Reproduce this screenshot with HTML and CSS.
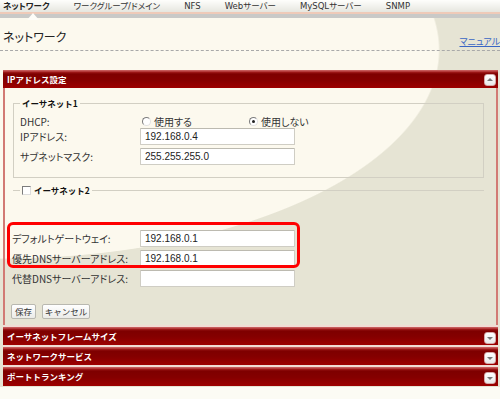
FILE: index.html
```html
<!DOCTYPE html>
<html lang="ja">
<head>
    <meta charset="UTF-8">
    <title>ネットワーク</title>
    <link rel="stylesheet" href="styles.css">
</head>
<body>
    <div class="nav">
        <a class="tab active">ネットワーク</a>
        <a class="tab">ワークグループ/ドメイン</a>
        <a class="tab">NFS</a>
        <a class="tab">Webサーバー</a>
        <a class="tab">MySQLサーバー</a>
        <a class="tab">SNMP</a>
    </div>

    <div class="main">
        <div class="page-head">
            <h1>ネットワーク</h1>
            <a class="manual" href="#">マニュアル</a>
        </div>

        <div class="panel">
            <div class="panel-head">IPアドレス設定<span class="toggle up"></span></div>
            <div class="panel-body">
                <fieldset class="group">
                    <legend>イーサネット1</legend>
                    <div class="row dhcp">
                        <span class="label">DHCP:</span>
                        <label class="opt first"><span class="radio"></span>使用する</label>
                        <label class="opt"><span class="radio checked"></span>使用しない</label>
                    </div>
                    <div class="row">
                        <label class="label">IPアドレス:</label>
                        <input class="field" type="text" value="192.168.0.4">
                    </div>
                    <div class="row">
                        <label class="label">サブネットマスク:</label>
                        <input class="field" type="text" value="255.255.255.0">
                    </div>
                </fieldset>

                <fieldset class="group folded">
                    <legend><span class="check"></span>イーサネット2</legend>
                </fieldset>

                <div class="rows">
                    <div class="row">
                        <label class="label">デフォルトゲートウェイ:</label>
                        <input class="field" type="text" value="192.168.0.1">
                    </div>
                    <div class="row">
                        <label class="label">優先DNSサーバーアドレス:</label>
                        <input class="field" type="text" value="192.168.0.1">
                    </div>
                    <div class="row">
                        <label class="label">代替DNSサーバーアドレス:</label>
                        <input class="field" type="text" value="">
                    </div>
                </div>

                <div class="actions">
                    <button class="btn save">保存</button>
                    <button class="btn cancel">キャンセル</button>
                </div>

                <!-- 注目枠 -->
                <div class="highlight"></div>
            </div>
            <div class="panel-head closed">イーサネットフレームサイズ<span class="toggle"></span></div>
            <div class="panel-head closed">ネットワークサービス<span class="toggle"></span></div>
            <div class="panel-head closed">ポートトランキング<span class="toggle"></span></div>
        </div>
    </div>
</body>
</html>
```

FILE: styles.css
```css
body {
    margin: 0;
    overflow: hidden;
    background: #fcfbf4;
    font-family: "Noto Sans CJK JP", sans-serif;
    color: #333;
}

/* タブ */
.nav {
    position: relative;
    z-index: 2;
    display: flex;
    gap: 24px;
    height: 12px;
    padding-left: 3px;
    background: linear-gradient(#fefefc, #e6e6df);
    border-bottom: 2px solid #efcab8;
}

.tab {
    position: relative;
    font-family: "DejaVu Sans", "Noto Sans CJK JP", sans-serif;
    font-size: 8.5px;
    line-height: 12px;
    color: #333;
    font-feature-settings: "palt";
    white-space: nowrap;
}

.tab.active {
    font-weight: bold;
    color: #222;
}

.tab.active::after {
    content: "";
    position: absolute;
    left: 24px;
    top: 13px;
    border-left: 6px solid transparent;
    border-right: 6px solid transparent;
    border-bottom: 7px solid #fefdf8;
}

/* 本体 */
.main {
    border-top: 4px solid #c9c9c7;
    background: radial-gradient(440px 209px at 0 32px, #fcf9ee 99.6%, #e6e4d4 100%);
    padding-bottom: 1px;
}

.page-head {
    display: flex;
    height: 32px;
    border-bottom: 1px dashed #a9a9a9;
}

.page-head h1 {
    flex: 1;
    margin: 0;
    padding: 11px 0 0 3px;
    font-size: 12px;
    line-height: 16px;
    font-weight: normal;
    color: #222;
    font-feature-settings: "palt";
}

.manual {
    margin: 18px 0 0 0;
    font-size: 9px;
    line-height: 12px;
    color: #3a66c4;
    white-space: nowrap;
    font-feature-settings: "palt";
}

/* パネル */
.panel {
    margin: 19px 2px 0 3px;
}

.panel-head {
    position: relative;
    height: 18px;
    padding-left: 4px;
    line-height: 18px;
    font-size: 8.5px;
    font-weight: bold;
    color: #fff;
    background: linear-gradient(#c65a5a 0, #c65a5a 1px, #a31c1c 2px, #7e0000 4px, #850000 55%, #9d0000 100%);
}

.panel-head.closed {
    border-top: 2px solid #f1dcd4;
}

.panel-head.closed:last-child {
    height: 19px;
}

.toggle {
    position: absolute;
    right: 2px;
    top: 4px;
    width: 10px;
    height: 10px;
    border: 1px solid #d6a9a9;
    border-radius: 3px;
    background: linear-gradient(#ffffff, #e9e9e9);
}

.toggle::after {
    content: "";
    position: absolute;
    left: 2px;
    top: 4px;
    border-left: 3px solid transparent;
    border-right: 3px solid transparent;
    border-top: 3px solid #777;
}

.toggle.up::after {
    top: 3px;
    border-top: none;
    border-bottom: 3px solid #777;
}

.panel-head.closed .toggle {
    top: 5px;
}

.panel-body {
    position: relative;
    padding: 9px 0 6px 7px;
    border-left: 2px solid #d27a74;
    border-right: 2px solid #d27a74;
    font-size: 10px;
    color: #333;
    font-feature-settings: "palt";
}

.group {
    margin: 0 12px 0 1px;
    padding: 0 6px 9px;
    border: 1px solid #d2cfc3;
}

.group legend {
    padding: 0 2px;
    font-size: 8.5px;
    font-weight: bold;
    line-height: 12px;
    color: #111;
    font-feature-settings: normal;
}

.group.folded {
    margin-top: 6px;
    padding: 0 0 0 7px;
    border: none;
    border-top: 1px solid #d2cfc3;
}

.check {
    display: inline-block;
    width: 9px;
    height: 9px;
    margin-right: 3px;
    vertical-align: -1px;
    box-sizing: border-box;
    border: 1px solid;
    border-color: #7c7c7c #dcdcdc #dcdcdc #7c7c7c;
    background: #fff;
}

.row {
    display: flex;
    align-items: flex-start;
    height: 20px;
}

.label {
    width: 128px;
    line-height: 17px;
    white-space: nowrap;
}

.group .label {
    width: 120px;
}

.row.dhcp {
    height: 13px;
    margin-top: 6px;
    align-items: center;
}

.row.dhcp .label {
    line-height: 13px;
}

.opt {
    display: flex;
    align-items: center;
    gap: 3px;
    line-height: 13px;
}

.opt.first {
    width: 107px;
    margin-left: 2px;
}

.radio {
    position: relative;
    width: 9px;
    height: 9px;
    box-sizing: border-box;
    border-radius: 50%;
    border: 1px solid;
    border-color: #7c7c7c #e2e2e2 #e2e2e2 #7c7c7c;
    background: #fff;
}

.radio.checked::after {
    content: "";
    position: absolute;
    left: 2px;
    top: 2px;
    width: 3px;
    height: 3px;
    border-radius: 50%;
    background: #222;
}

.field {
    width: 155px;
    height: 17px;
    box-sizing: border-box;
    margin: 0;
    padding: 0 4px;
    border: 1px solid #cfcdc4;
    border-top-color: #bcbab0;
    border-radius: 1px;
    background: #fff;
    font-family: "Liberation Sans", sans-serif;
    font-size: 10px;
    color: #222;
}

.rows {
    margin-top: 34px;
}

.actions {
    display: flex;
    gap: 6px;
    margin: 14px 0 0 -1px;
}

.btn {
    height: 15px;
    padding: 0;
    border: 1px solid #b9b8b0;
    border-radius: 2px;
    background: linear-gradient(#ffffff, #ebebe8);
    font-family: "Noto Sans CJK JP", sans-serif;
    font-size: 8.5px;
    line-height: 13px;
    color: #333;
}

.btn.save {
    width: 25px;
}

.btn.cancel {
    width: 48px;
}

.highlight {
    position: absolute;
    left: 2px;
    top: 134px;
    width: 293px;
    height: 46px;
    box-sizing: border-box;
    border: 3px solid #f00;
    border-radius: 6px;
}
```
